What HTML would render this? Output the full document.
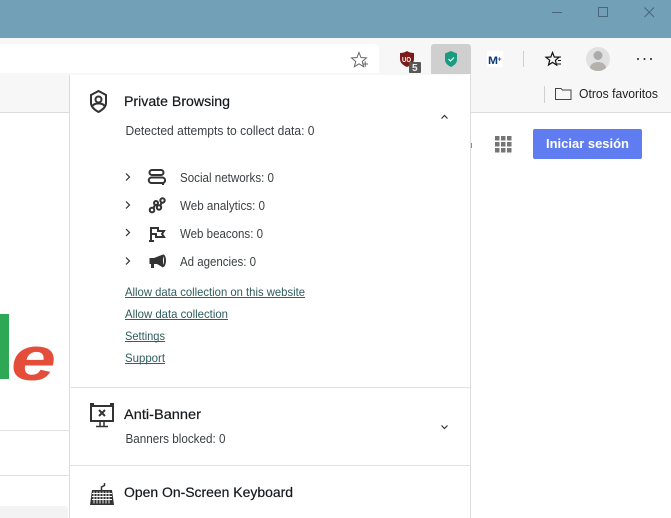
<!DOCTYPE html>
<html><head><meta charset="utf-8"><title>Private Browsing</title>
<style>
html,body{margin:0;padding:0;background:#fff;width:671px;height:518px;overflow:hidden}
svg{display:block}
text{font-family:"Liberation Sans",sans-serif}
.h{font-size:14px;fill:#15191c;stroke:#15191c;stroke-width:.2}
.s{font-size:13px;fill:#3a3f42}
.l{font-size:12px;fill:#2e5c5c}
.i{fill:none;stroke:#333;stroke-width:2}
</style></head><body>
<svg width="671" height="518" viewBox="0 0 671 518" xmlns="http://www.w3.org/2000/svg">
<rect width="671" height="518" fill="#fff"/>
<!-- title bar -->
<rect width="671" height="38" fill="#72a0b7"/>
<g fill="none" stroke="#47677a" stroke-width="1">
<path d="M552 12.500H562"/><rect x="598.500" y="7.500" width="9" height="9"/><path d="M644.500 7.500L654 17M654 7.500L644.500 17"/>
</g>
<!-- toolbar -->
<rect y="38" width="671" height="75" fill="#f7f7f7"/>
<rect y="112" width="671" height="1" fill="#dcdcdc"/>
<path d="M0 44H374a5 5 0 0 1 5 5V73H0Z" fill="#fff"/>
<path d="M359 52.500l2 5 5.500.4-4.200 3.500 1.300 5.300-4.600-2.900-4.600 2.900 1.300-5.300-4.200-3.500 5.500-.4Z" fill="none" stroke="#666" stroke-width="1"/>
<path d="M362.500 64h5.500M365.200 61.200v5.500" stroke="#666" stroke-width="1"/>
<!-- uBlock -->
<path d="M400 53q4 0 7-2 3 2 7 2v6q0 5-7 8-7-3-7-8Z" fill="#7d1a1a"/>
<text x="402" y="62" font-size="7" font-weight="bold" fill="#fff" textLength="9" lengthAdjust="spacingAndGlyphs">UO</text>
<rect x="409" y="62" width="12" height="11" rx="1" fill="#585858"/>
<text x="412" y="71" font-size="10" font-weight="bold" fill="#eee">5</text>
<!-- active extension -->
<path d="M431 47a3 3 0 0 1 3-3h34a3 3 0 0 1 3 3V74H431Z" fill="#cfcfcf"/>
<path d="M451 51l6 2.500v6.500q0 4-6 7-6-3-6-7V53.500Z" fill="#1b9a80"/>
<path d="M448.500 59l2 2 3.500-3.500" fill="none" stroke="#dff" stroke-width="1.200"/>
<!-- M+ -->
<rect x="487" y="51" width="16" height="16" fill="#fff"/>
<text x="488" y="64" font-size="11" font-weight="bold" fill="#0d3b78" textLength="10" lengthAdjust="spacingAndGlyphs">M</text>
<text x="497.500" y="61.500" font-size="7" font-weight="bold" fill="#2a5c9a">+</text>
<rect x="523" y="51" width="1" height="16" fill="#cfcfcf"/>
<!-- favourites -->
<path d="M552.500 52.500l1.800 4.500 4.700.3-3.600 3 1.200 4.700-4.100-2.600-4 2.600 1.200-4.700-3.700-3 4.800-.3Z" fill="none" stroke="#111" stroke-width="1.200"/>
<path d="M557 57h4M558 60.500h3M557 64h4" stroke="#111" stroke-width="1"/>
<!-- avatar -->
<circle cx="598" cy="59" r="12" fill="#e1e1e1"/>
<circle cx="598" cy="55.500" r="4.500" fill="#ababab"/>
<path d="M590 68a8 6 0 0 1 16 0a12 12 0 0 1-16 0Z" fill="#b4b0aa"/>
<g fill="#222"><circle cx="638" cy="59" r="1"/><circle cx="644.500" cy="59" r="1"/><circle cx="651" cy="59" r="1"/></g>
<!-- bookmarks -->
<rect x="544" y="86" width="1" height="17" fill="#cfcfcf"/>
<path d="M555.500 99.500V88.500H561L562.500 90H571V99.500Z" fill="none" stroke="#444" stroke-width="1"/>
<text x="579" y="98" font-size="13" fill="#222" textLength="79" lengthAdjust="spacingAndGlyphs">Otros favoritos</text>
<!-- page -->
<rect x="0" y="314" width="9" height="65" fill="#2fa855"/>
<text x="11" y="380" font-size="62" font-weight="bold" font-style="italic" fill="#e44d3a" textLength="45" lengthAdjust="spacingAndGlyphs">e</text>
<rect y="430" width="69" height="1" fill="#e2e2e2"/>
<rect y="475" width="69" height="1" fill="#e2e2e2"/>
<path d="M0 506H65a3 3 0 0 1 3 3V518H0Z" fill="#f3f3f3"/>
<rect x="470" y="143" width="2" height="5" fill="#6f8fc0"/>
<g fill="#757575">
<rect x="495" y="136" width="4.500" height="4.500"/><rect x="501" y="136" width="4.500" height="4.500"/><rect x="507" y="136" width="4.500" height="4.500"/>
<rect x="495" y="142" width="4.500" height="4.500"/><rect x="501" y="142" width="4.500" height="4.500"/><rect x="507" y="142" width="4.500" height="4.500"/>
<rect x="495" y="148" width="4.500" height="4.500"/><rect x="501" y="148" width="4.500" height="4.500"/><rect x="507" y="148" width="4.500" height="4.500"/>
</g>
<rect x="533" y="129" width="109" height="30" rx="2" fill="#5f7cf0"/>
<text x="546" y="148" font-size="12.500" font-weight="bold" fill="#fff" textLength="83" lengthAdjust="spacingAndGlyphs">Iniciar sesión</text>
<!-- popup -->
<rect x="69" y="75" width="402" height="443" fill="#dcdcdc"/>
<rect x="70" y="75" width="400" height="443" fill="#fff"/>
<rect x="70" y="387" width="400" height="1" fill="#dde4e4"/>
<rect x="70" y="465" width="400" height="1" fill="#dde4e4"/>
<!-- private browsing -->
<path class="i" d="M98.500 91l7.500 4v8q0 5-7.500 9-7.500-4-7.500-9v-8Z"/>
<circle class="i" cx="98.500" cy="99.500" r="3" stroke-width="1.600"/>
<path class="i" stroke-width="1.600" d="M92 107q1-3.500 6.500-3.500t6.500 3.500"/>
<text class="h" x="124" y="106" textLength="106" lengthAdjust="spacingAndGlyphs">Private Browsing</text>
<text class="s" x="125.500" y="135" textLength="189" lengthAdjust="spacingAndGlyphs">Detected attempts to collect data: 0</text>
<path d="M441.500 118.500l3-3 3 3" fill="none" stroke="#333" stroke-width="1.200"/>
<!-- chevrons -->
<g fill="none" stroke="#333" stroke-width="1.200">
<path d="M126 173.500l3.500 3.500-3.500 3.500"/><path d="M126 201.500l3.500 3.500-3.500 3.500"/><path d="M126 229l3.500 3.500-3.500 3.500"/><path d="M126 257.500l3.500 3.500-3.500 3.500"/>
</g>
<!-- social -->
<path class="i" d="M152 170h9a2.500 2.500 0 0 1 0 5h-9a2.500 2.500 0 0 1 0-5Z"/>
<path class="i" d="M151.500 177.500H162.500a2.800 2.800 0 0 1 .5 5.500v2M151.500 177.500a2.700 2.700 0 0 0 0 5.500H163"/>
<!-- analytics -->
<g class="i" stroke-width="1.800"><circle cx="152" cy="210" r="2.300"/><circle cx="159" cy="207.500" r="2.200"/><circle cx="156" cy="203" r="2"/><circle cx="162.500" cy="200.500" r="2.200"/></g>
<path class="i" stroke-width="1.800" d="M153.500 208l1.500-3M157 204.500l1 1.500M160.500 205.500l1-3"/>
<!-- flag -->
<path class="i" d="M151 227v14M149 241h5M151 228H158V231H164L162 234L164 237H156V234H151"/>
<!-- megaphone -->
<path d="M163 254.500v13l-6-3.500h-3v4h-3v-4h-1.500v-6h4.500Z" fill="#333"/>
<path class="i" d="M163 255q2 1.500 2 5.500t-2 6"/>
<text class="s" x="180" y="182" textLength="94" lengthAdjust="spacingAndGlyphs">Social networks: 0</text>
<text class="s" x="180" y="210" textLength="85" lengthAdjust="spacingAndGlyphs">Web analytics: 0</text>
<text class="s" x="180" y="238" textLength="83" lengthAdjust="spacingAndGlyphs">Web beacons: 0</text>
<text class="s" x="180" y="266" textLength="76" lengthAdjust="spacingAndGlyphs">Ad agencies: 0</text>
<!-- links -->
<text class="l" x="125" y="296" textLength="180" lengthAdjust="spacingAndGlyphs">Allow data collection on this website</text>
<rect x="125" y="297" width="180" height="1" fill="#1f6a62"/>
<text class="l" x="125" y="318" textLength="103" lengthAdjust="spacingAndGlyphs">Allow data collection</text>
<rect x="125" y="319" width="103" height="1" fill="#1f6a62"/>
<text class="l" x="125" y="340" textLength="40" lengthAdjust="spacingAndGlyphs">Settings</text>
<rect x="125" y="341" width="40" height="1" fill="#1f6a62"/>
<text class="l" x="125" y="362" textLength="40" lengthAdjust="spacingAndGlyphs">Support</text>
<rect x="125" y="363" width="40" height="1" fill="#1f6a62"/>
<!-- anti-banner -->
<path class="i" d="M91 406h22v15H91Z"/>
<path d="M90 404h4M110 404h4" stroke="#333" stroke-width="2"/>
<path d="M99 410l6 6M105 410l-6 6" stroke="#333" stroke-width="2"/>
<path d="M100 421v6M104 421v6M96 426.500h12" stroke="#333" stroke-width="1.500" fill="none"/>
<text class="h" x="124" y="419" textLength="77" lengthAdjust="spacingAndGlyphs">Anti-Banner</text>
<text class="s" x="125.500" y="443" textLength="100" lengthAdjust="spacingAndGlyphs">Banners blocked: 0</text>
<path d="M441.500 425.500l3 3 3-3" fill="none" stroke="#333" stroke-width="1.200"/>
<!-- keyboard -->
<path d="M92 490h20l2 15H90Z" fill="#333"/>
<path d="M92 493.500h20M92 496.500h20M92 499.500h20M94 491.500v12M97 491.500v12M100 491.500v12M103 491.500v12M106 491.500v12M109 491.500v12" stroke="#fff" stroke-width=".9"/>
<path d="M101.500 490v-3l3-1.500v-2.500" fill="none" stroke="#333" stroke-width="1.500"/>
<text class="h" x="124" y="497" textLength="169" lengthAdjust="spacingAndGlyphs">Open On-Screen Keyboard</text>
</svg>
</body></html>
